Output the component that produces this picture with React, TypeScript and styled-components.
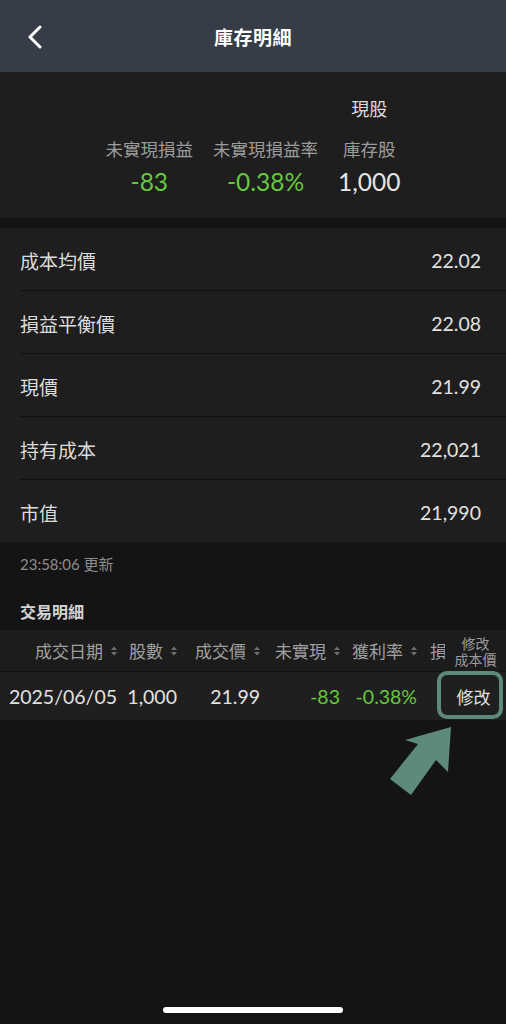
import styled, {createGlobalStyle} from 'styled-components';

const GlobalStyle = createGlobalStyle`
  html, body {
    margin: 0;
    padding: 0;
    background: #141414;
  }
  * {
    box-sizing: border-box;
  }
`;

const GREEN = '#66c83c';

type Column = {
  key: string;
  title: string;
  width: number;
};

const columns: Column[] = [
  {key: 'date', title: '成交日期', width: 121},
  {key: 'qty', title: '股數', width: 60},
  {key: 'price', title: '成交價', width: 83},
  {key: 'pnl', title: '未實現', width: 80},
  {key: 'rate', title: '獲利率', width: 77},
  {key: 'breakeven', title: '損益平衡價', width: 112},
];

const summaryRows = [
  {label: '成本均價', value: '22.02'},
  {label: '損益平衡價', value: '22.08'},
  {label: '現價', value: '21.99'},
  {label: '持有成本', value: '22,021'},
  {label: '市值', value: '21,990'},
];

const trade: Record<string, {text: string; negative?: boolean}> = {
  date: {text: '2025/06/05'},
  qty: {text: '1,000'},
  price: {text: '21.99'},
  pnl: {text: '-83', negative: true},
  rate: {text: '-0.38%', negative: true},
  breakeven: {text: '22.08'},
};

const SortIcon = () => (
  <svg width="6" height="10" viewBox="0 0 6 10">
    <path d="M0 4 L3 0.5 L6 4 Z" fill="#707070" />
    <path d="M0 6 L3 9.5 L6 6 Z" fill="#707070" />
  </svg>
);

const App = () => {
  return (
    <Page>
      <GlobalStyle />
      <TopBar>
        <BackButton aria-label="返回">
          <svg width="16" height="24" viewBox="0 0 16 24">
            <path
              d="M13 2 L3 12 L13 22"
              fill="none"
              stroke="#ffffff"
              strokeWidth="3"
              strokeLinecap="round"
              strokeLinejoin="round"
            />
          </svg>
        </BackButton>
        <Title>庫存明細</Title>
        <span />
      </TopBar>

      <Summary>
        <span />
        <span />
        <StockType>現股</StockType>
        <SummaryLabel>未實現損益</SummaryLabel>
        <SummaryLabel>未實現損益率</SummaryLabel>
        <SummaryLabel>庫存股</SummaryLabel>
        <SummaryValue $color={GREEN}>-83</SummaryValue>
        <SummaryValue $color={GREEN}>-0.38%</SummaryValue>
        <SummaryValue>1,000</SummaryValue>
      </Summary>

      <DetailList>
        {summaryRows.map(row => (
          <DetailRow key={row.label}>
            <DetailLabel>{row.label}</DetailLabel>
            <DetailValue>{row.value}</DetailValue>
          </DetailRow>
        ))}
      </DetailList>

      <UpdateBlock>
        <UpdateTime>23:58:06 更新</UpdateTime>
        <SectionTitle>交易明細</SectionTitle>
      </UpdateBlock>

      <Table>
        <HeadRow>
          <Scroller>
            {columns.map(col => (
              <HeadCell key={col.key} $width={col.width}>
                {col.title}
                <SortIcon />
              </HeadCell>
            ))}
          </Scroller>
          <FixedHead>
            <HeadLine>修改</HeadLine>
            <HeadLine>成本價</HeadLine>
          </FixedHead>
        </HeadRow>
        <DataRow>
          <Scroller>
            {columns.map(col => (
              <DataCell
                key={col.key}
                $width={col.width}
                $color={trade[col.key].negative ? GREEN : undefined}
              >
                {trade[col.key].text}
              </DataCell>
            ))}
          </Scroller>
          <FixedCell>
            <EditButton>修改</EditButton>
            <Highlight />
            <Pointer width="80" height="80" viewBox="0 0 80 80">
              <polygon points="71,6 68,51 56,39 31,74 10,58 38,23 25,19" fill="#5d8a79" />
            </Pointer>
          </FixedCell>
        </DataRow>
      </Table>

      <Filler />
      <HomeBar />
    </Page>
  );
};

export default App;

// Styled Components

const Page = styled.div`
  min-height: 100vh;
  display: flex;
  flex-direction: column;
  background: #141414;
  font-family: Lato, 'Noto Sans CJK TC', sans-serif;
  color: #e0e0e0;
`;

const TopBar = styled.header`
  height: 72px;
  display: grid;
  grid-template-columns: 60px 1fr 60px;
  align-items: center;
  background: #363d49;
`;

const BackButton = styled.div`
  display: flex;
  align-items: center;
  padding-left: 27px;
  padding-top: 1px;
`;

const Title = styled.h1`
  margin: 0;
  text-align: center;
  font-size: 19px;
  font-weight: 700;
  color: #ffffff;
  letter-spacing: 0.5px;
`;

const Summary = styled.section`
  display: grid;
  grid-template-columns: repeat(3, auto);
  justify-content: center;
  column-gap: 20px;
  padding: 26px 0 22px;
  background: #1e1e1e;
  text-align: center;
`;

const StockType = styled.div`
  font-size: 18px;
  line-height: 22px;
  color: #dcdcdc;
  margin-bottom: 19px;
`;

const SummaryLabel = styled.div`
  font-size: 17.5px;
  line-height: 22px;
  color: #9c9c9c;
  white-space: nowrap;
`;

const SummaryValue = styled.div<{$color?: string}>`
  margin-top: 7px;
  font-size: 24.5px;
  line-height: 28px;
  color: ${p => p.$color ?? '#e6e6e6'};
`;

const DetailList = styled.section`
  margin-top: 10px;
  padding-left: 20px;
  background: #1e1e1e;
`;

const DetailRow = styled.div`
  height: 63px;
  display: flex;
  align-items: center;
  justify-content: space-between;
  padding: 3px 25px 0 0;
  border-bottom: 1px solid #0f0f0f;

  &:last-child {
    height: 62px;
    border-bottom: none;
  }
`;

const DetailLabel = styled.span`
  font-size: 19px;
  color: #dcdcdc;
`;

const DetailValue = styled.span`
  font-size: 19.5px;
  color: #e2e2e2;
`;

const UpdateBlock = styled.div`
  padding: 12px 20px 8px;
`;

const UpdateTime = styled.div`
  font-size: 15px;
  line-height: 20px;
  color: #8c8c8c;
`;

const SectionTitle = styled.div`
  margin-top: 28px;
  font-size: 16px;
  line-height: 20px;
  font-weight: 700;
  color: #d4d4d4;
`;

const Table = styled.div`
  display: flex;
  flex-direction: column;
`;

const HeadRow = styled.div`
  height: 41px;
  display: flex;
  background: #1c1c1c;
`;

const DataRow = styled.div`
  height: 50px;
  display: flex;
  background: #1f1f1f;
  border-top: 1px solid #111111;
  border-bottom: 1px solid #111111;
`;

const Scroller = styled.div`
  flex: 1;
  display: flex;
  overflow: hidden;
`;

const HeadCell = styled.div<{$width: number}>`
  flex: 0 0 ${p => p.$width}px;
  display: flex;
  align-items: center;
  justify-content: flex-end;
  gap: 8px;
  padding-right: 4px;
  font-size: 17px;
  color: #a0a0a0;
  white-space: nowrap;
`;

const DataCell = styled.div<{$width: number; $color?: string}>`
  flex: 0 0 ${p => p.$width}px;
  display: flex;
  align-items: center;
  justify-content: flex-end;
  padding-right: 4px;
  font-size: 19.5px;
  color: ${p => p.$color ?? '#e2e2e2'};
  white-space: nowrap;
`;

const FixedHead = styled.div`
  flex: 0 0 61px;
  display: flex;
  flex-direction: column;
  align-items: center;
  justify-content: center;
  padding-top: 2px;
  background: #1c1c1c;
`;

const HeadLine = styled.span`
  font-size: 14px;
  line-height: 16px;
  color: #9a9a9a;
  white-space: nowrap;
`;

const FixedCell = styled.div`
  position: relative;
  flex: 0 0 61px;
  display: flex;
  align-items: center;
  justify-content: center;
  background: #1f1f1f;
`;

const EditButton = styled.span`
  font-size: 17px;
  color: #e0e0e0;
  padding-right: 4px;
`;

const Highlight = styled.div`
  position: absolute;
  left: -8px;
  right: 3px;
  top: -1px;
  bottom: 1px;
  border: 4px solid #5d8a79;
  border-radius: 10px;
`;

const Pointer = styled.svg`
  position: absolute;
  left: -65px;
  top: 49px;
`;

const Filler = styled.div`
  flex: 1;
`;

const HomeBar = styled.div`
  width: 180px;
  height: 6px;
  margin: 0 auto 11px;
  border-radius: 3px;
  background: #ffffff;
`;
